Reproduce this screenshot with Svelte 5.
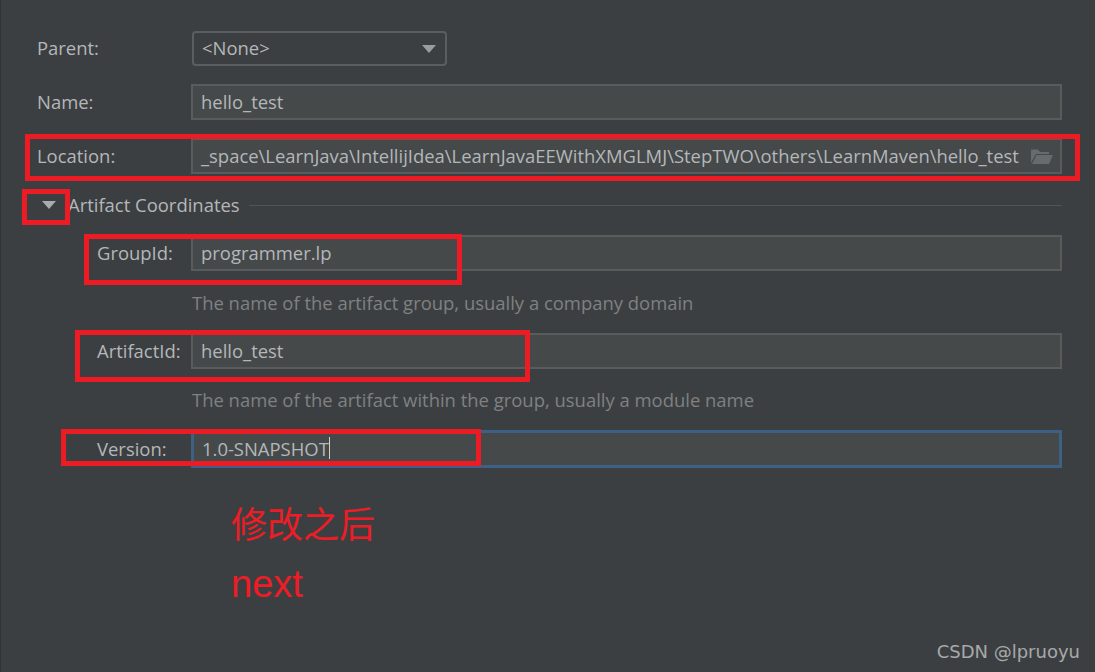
<script>
  const annotations = [
    { cls: 'loc' },
    { cls: 'tri' },
    { cls: 'group' },
    { cls: 'artifact' },
    { cls: 'version' },
  ];
</script>

<div class="page">
  <div class="form">
    <div class="row parent-row">
      <span class="label">Parent:</span>
      <div class="combo">
        <span>&lt;None&gt;</span>
        <svg width="14" height="8" viewBox="0 0 14 8"><path d="M0 0h14L7 8z" fill="#9a9c9e" /></svg>
      </div>
    </div>
    <div class="row name-row">
      <span class="label">Name:</span>
      <div class="field">hello_test</div>
    </div>
    <div class="row loc-row">
      <span class="label">Location:</span>
      <div class="field path">
        <span>_space\LearnJava\IntellijIdea\LearnJavaEEWithXMGLMJ\StepTWO\others\LearnMaven\hello_test</span>
        <svg class="folder" width="24" height="16" viewBox="0 0 24 16">
          <path d="M1 15V1.500h7l2 2.500h9v2H6z" fill="#666b6d" />
          <path d="M6.500 7H23l-4 9H2z" fill="#666b6d" />
        </svg>
      </div>
    </div>

    <div class="section">
      <svg class="arrow" width="14" height="8" viewBox="0 0 14 8"><path d="M0 0h14L7 8z" fill="#a9abad" /></svg>
      <span class="section-title">Artifact Coordinates</span>
      <span class="rule"></span>
    </div>

    <div class="row sub group-row">
      <span class="label">GroupId:</span>
      <div class="field">programmer.lp</div>
    </div>
    <div class="hint">The name of the artifact group, usually a company domain</div>
    <div class="row sub artifact-row">
      <span class="label">ArtifactId:</span>
      <div class="field">hello_test</div>
    </div>
    <div class="hint second">The name of the artifact within the group, usually a module name</div>
    <div class="row sub version-row">
      <span class="label">Version:</span>
      <div class="field focused">1.0-SNAPSHOT<i class="caret"></i></div>
    </div>

    <div class="note">
      <div class="note-cn">修改之后</div>
      <div class="note-en">next</div>
    </div>
  </div>

  {#each annotations as a}
    <div class="mark {a.cls}"></div>
  {/each}

  <div class="watermark">CSDN @lpruoyu</div>
</div>

<style>
  :global(body) {
    margin: 0;
    background: #3c3f41;
  }

  .page {
    position: relative;
    width: 1095px;
    height: 672px;
    overflow: hidden;
    background: #3c3f41;
    border-left: 1px solid #303234;
    box-sizing: border-box;
    font-family: "Open Sans", "Noto Sans", sans-serif;
    font-size: 18.45px;
    color: #b4b7b9;
  }

  .form {
    display: flex;
    flex-direction: column;
    padding: 31px 33px 0 36px;
  }

  .row {
    display: flex;
    align-items: center;
  }

  .label {
    width: 154px;
    flex-shrink: 0;
    padding-bottom: 2px;
  }

  .sub .label {
    width: 94px;
    margin-left: 60px;
  }

  .combo {
    width: 255px;
    height: 35px;
    box-sizing: border-box;
    margin-left: 1px;
    padding: 0 9px 2px 8px;
    display: flex;
    align-items: center;
    justify-content: space-between;
    border: 2px solid #5b5e60;
    border-radius: 4px;
  }

  .combo svg {
    margin-top: 2px;
  }

  .field {
    flex: 1;
    min-width: 0;
    height: 36px;
    box-sizing: border-box;
    padding: 0 8px 2px;
    display: flex;
    align-items: center;
    background: #45494a;
    border: 2px solid #595b5d;
    white-space: nowrap;
  }

  .name-row { margin-top: 18px; }
  .loc-row { margin-top: 18px; }

  .path {
    justify-content: space-between;
    overflow: hidden;
    padding-right: 6px;
  }

  .folder {
    flex-shrink: 0;
    margin-top: 2px;
  }

  .section {
    display: flex;
    align-items: center;
    height: 24px;
    margin-top: 19px;
  }

  .arrow {
    margin-left: 5px;
    flex-shrink: 0;
  }

  .section-title {
    margin-left: 12px;
    padding-bottom: 2px;
    white-space: nowrap;
  }

  .rule {
    flex: 1;
    height: 1px;
    margin-left: 9px;
    background: #515355;
  }

  .group-row { margin-top: 18px; }

  .hint {
    margin-left: 155px;
    margin-top: 19px;
    height: 25px;
    line-height: 25px;
    color: #7f8183;
  }

  .hint.second {
    margin-top: 18px;
  }

  .artifact-row { margin-top: 18px; }
  .version-row { margin-top: 18px; }

  .focused {
    height: 38px;
    border: 3px solid #3d6185;
    position: relative;
  }

  .caret {
    display: inline-block;
    width: 1px;
    height: 22px;
    background: #d0d0d0;
  }

  .note {
    margin-left: 194px;
    margin-top: 29px;
    color: #ee1c25;
    font-family: "Noto Sans CJK SC", sans-serif;
    font-size: 36px;
  }

  .note-cn {
    height: 50px;
    line-height: 50px;
  }

  .note-en {
    height: 60px;
    line-height: 60px;
    margin-top: 7px;
    font-family: "Liberation Sans", sans-serif;
    font-size: 38px;
  }

  .mark {
    position: absolute;
    box-sizing: border-box;
    border: 5px solid #ed1c24;
  }

  .loc { left: 24px; top: 134px; width: 1055px; height: 47px; }
  .tri { left: 21px; top: 189px; width: 48px; height: 36px; }
  .group { left: 83px; top: 234px; width: 378px; height: 51px; }
  .artifact { left: 74px; top: 330px; width: 455px; height: 52px; }
  .version { left: 60px; top: 429px; width: 420px; height: 37px; }

  .watermark {
    position: absolute;
    right: 15px;
    bottom: 10px;
    font-family: "DejaVu Sans", sans-serif;
    font-size: 18px;
    color: #a7a9aa;
  }
</style>
